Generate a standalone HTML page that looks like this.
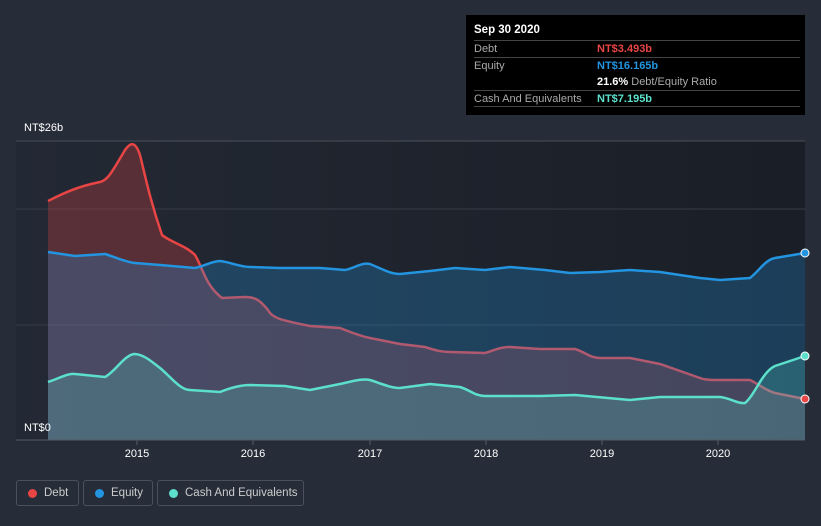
<!DOCTYPE html>
<html><head><meta charset="utf-8"><style>
body{margin:0;width:821px;height:526px;background:#262c38;font-family:"Liberation Sans",sans-serif;overflow:hidden;position:relative}
.tt{position:absolute;left:466px;top:15px;width:339px;height:100px;background:#000;color:#fff;font-size:11px}
.tt .h{position:absolute;left:8px;top:9px;font-weight:bold;font-size:11.5px}
.row{position:absolute;left:8px;width:326px;height:16px;border-top:1px solid #444}
.row span{position:absolute;top:2px}
.l{left:0;color:#aaa}.v{left:123px;font-weight:bold}
.lab{position:absolute;color:#fff;font-size:11px}
.leg{position:absolute;top:480px;height:26px;border:1px solid #4a505c;border-radius:3px;color:#ccc;font-size:11.5px;box-sizing:border-box;line-height:24px}
.leg i{position:absolute;left:11px;top:8px;width:9px;height:9px;border-radius:50%}
.leg span{position:absolute;left:27px}
</style></head><body>
<svg width="821" height="526" style="position:absolute;left:0;top:0">
<defs><linearGradient id="bg" x1="0" x2="1"><stop offset="0" stop-color="#232934"/><stop offset="1" stop-color="#1a1e26"/></linearGradient></defs>
<rect x="16" y="141" width="789" height="299" fill="url(#bg)"/>
<line x1="16" y1="141" x2="805" y2="141" stroke="#4a505a"/>
<line x1="16" y1="209" x2="805" y2="209" stroke="#363c47"/>
<line x1="16" y1="325" x2="805" y2="325" stroke="#363c47"/>
<path id="d" d="M48,201 C60,195 75,187 100,182 C108,180 112,172 125,150 C130,143 135,140 140,155 C145,175 150,200 162,235 C170,242 185,245 195,255 C203,268 205,285 222,298 L245,297 C255,297 260,300 268,310 C272,318 280,320 310,326 L340,328 C350,332 360,336 370,338 L400,344 L425,347 C435,350 440,352 450,352 L485,353 C495,350 500,347 510,347 L540,349 L575,349 C585,352 590,358 600,358 L630,358 L660,364 L700,378 C705,380 710,380 715,380 L750,380 C760,385 765,390 775,393 L805,399" fill="none"/>
<path d="M48,201 C60,195 75,187 100,182 C108,180 112,172 125,150 C130,143 135,140 140,155 C145,175 150,200 162,235 C170,242 185,245 195,255 C203,268 205,285 222,298 L245,297 C255,297 260,300 268,310 C272,318 280,320 310,326 L340,328 C350,332 360,336 370,338 L400,344 L425,347 C435,350 440,352 450,352 L485,353 C495,350 500,347 510,347 L540,349 L575,349 C585,352 590,358 600,358 L630,358 L660,364 L700,378 C705,380 710,380 715,380 L750,380 C760,385 765,390 775,393 L805,399 L805,440 L48,440Z" fill="#e84545" fill-opacity="0.28"/>
<path d="M48,201 C60,195 75,187 100,182 C108,180 112,172 125,150 C130,143 135,140 140,155 C145,175 150,200 162,235 C170,242 185,245 195,255 C203,268 205,285 222,298 L245,297 C255,297 260,300 268,310 C272,318 280,320 310,326 L340,328 C350,332 360,336 370,338 L400,344 L425,347 C435,350 440,352 450,352 L485,353 C495,350 500,347 510,347 L540,349 L575,349 C585,352 590,358 600,358 L630,358 L660,364 L700,378 C705,380 710,380 715,380 L750,380 C760,385 765,390 775,393 L805,399" fill="none" stroke="#e84545" stroke-width="2.5"/>
<path d="M48,252 L75,256 L105,254 C115,257 125,262 135,263 L160,265 L195,268 C205,266 212,261 220,261 C230,262 240,267 250,267 L280,268 L320,268 L345,270 C355,268 362,262 370,264 C380,268 390,274 400,274 L430,271 L455,268 L485,270 L510,267 L545,270 L570,273 L600,272 L630,270 L660,272 L700,278 L720,280 L750,278 C760,270 765,260 775,258 L805,253 L805,440 L48,440Z" fill="#2394df" fill-opacity="0.28"/>
<path d="M48,252 L75,256 L105,254 C115,257 125,262 135,263 L160,265 L195,268 C205,266 212,261 220,261 C230,262 240,267 250,267 L280,268 L320,268 L345,270 C355,268 362,262 370,264 C380,268 390,274 400,274 L430,271 L455,268 L485,270 L510,267 L545,270 L570,273 L600,272 L630,270 L660,272 L700,278 L720,280 L750,278 C760,270 765,260 775,258 L805,253" fill="none" stroke="#2394df" stroke-width="2.5"/>
<path d="M48,382 C60,378 68,373 75,374 L105,377 C115,372 125,354 135,354 C145,355 152,362 160,368 C170,376 180,390 190,390 L220,392 C230,388 240,385 250,385 L285,386 L310,390 L340,384 C350,382 362,378 370,380 C380,383 390,388 400,388 L430,384 L460,387 C470,390 475,396 485,396 L540,396 L575,395 L630,400 L660,397 L720,397 C730,398 738,404 745,403 C755,395 762,372 775,366 L805,356 L805,440 L48,440Z" fill="#5ce0cc" fill-opacity="0.22"/>
<path d="M48,382 C60,378 68,373 75,374 L105,377 C115,372 125,354 135,354 C145,355 152,362 160,368 C170,376 180,390 190,390 L220,392 C230,388 240,385 250,385 L285,386 L310,390 L340,384 C350,382 362,378 370,380 C380,383 390,388 400,388 L430,384 L460,387 C470,390 475,396 485,396 L540,396 L575,395 L630,400 L660,397 L720,397 C730,398 738,404 745,403 C755,395 762,372 775,366 L805,356" fill="none" stroke="#5ce0cc" stroke-width="2.5"/>
<circle cx="805" cy="253" r="4" fill="#2394df" stroke="#fff" stroke-width="1"/>
<circle cx="805" cy="356" r="4" fill="#5ce0cc" stroke="#fff" stroke-width="1"/>
<circle cx="805" cy="399" r="4" fill="#e84545" stroke="#fff" stroke-width="1"/>
<line x1="16" y1="440" x2="805" y2="440" stroke="#555b66"/>
<g stroke="#555b66"><line x1="137" y1="440" x2="137" y2="445"/><line x1="253" y1="440" x2="253" y2="445"/><line x1="370" y1="440" x2="370" y2="445"/><line x1="486" y1="440" x2="486" y2="445"/><line x1="602" y1="440" x2="602" y2="445"/><line x1="718" y1="440" x2="718" y2="445"/></g>
<g fill="#fff" font-size="11" text-anchor="middle" font-family="Liberation Sans"><text x="137" y="457">2015</text><text x="253" y="457">2016</text><text x="370" y="457">2017</text><text x="486" y="457">2018</text><text x="602" y="457">2019</text><text x="718" y="457">2020</text></g>
</svg>
<div class="lab" style="left:24px;top:122px">NT$26b</div>
<div class="lab" style="left:24px;top:422px">NT$0</div>
<div class="tt">
<div class="h">Sep 30 2020</div>
<div class="row" style="top:25px"><span class="l">Debt</span><span class="v" style="color:#e84545">NT$3.493b</span></div>
<div class="row" style="top:42px"><span class="l">Equity</span><span class="v" style="color:#2394df">NT$16.165b</span></div>
<div class="row" style="top:59px;border:none"><span class="v" style="color:#fff">21.6% <b style="color:#aaa;font-weight:normal">Debt/Equity Ratio</b></span></div>
<div class="row" style="top:75px"><span class="l">Cash And Equivalents</span><span class="v" style="color:#5ce0cc">NT$7.195b</span></div>
<div class="row" style="top:91px;height:0"></div>
</div>
<div class="leg" style="left:16px;width:63px"><i style="background:#e84545"></i><span>Debt</span></div>
<div class="leg" style="left:83px;width:70px"><i style="background:#2394df"></i><span>Equity</span></div>
<div class="leg" style="left:157px;width:147px"><i style="background:#5ce0cc"></i><span>Cash And Equivalents</span></div>
</body></html>
